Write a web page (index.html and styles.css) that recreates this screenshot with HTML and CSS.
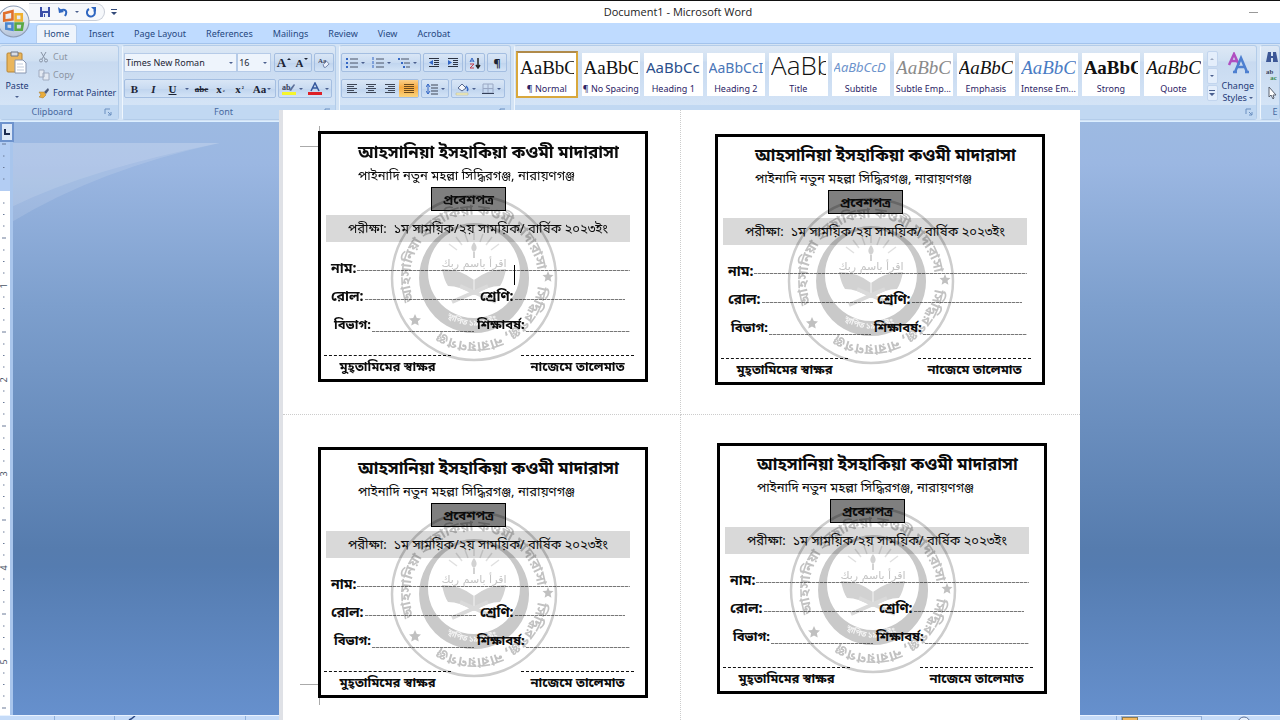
FILE: index.html
```html
<!DOCTYPE html>
<html lang="en">
<head>
<meta charset="utf-8">
<title>Document1 - Microsoft Word</title>
<link rel="stylesheet" href="styles.css">
</head>
<body>
<svg class="defs" aria-hidden="true">
  <defs>
    <linearGradient id="orb" x1="0" y1="0" x2="0" y2="1"><stop offset="0" stop-color="#fff"/><stop offset=".5" stop-color="#dbe3ee"/><stop offset="1" stop-color="#b4c4da"/></linearGradient>
    <symbol id="launch" viewBox="0 0 8 8"><path d="M1 6V1h5M4 4l3 3M7 4v3H4" fill="none" stroke="#6b8fc0"/></symbol>
    <symbol id="seal" viewBox="0 0 168 168">
      <path id="arc-top" d="M24 107A64 64 0 1 1 147.800 89.600" fill="none"/>
      <path id="arc-right" d="M147.600 92A64 64 0 0 1 26 111" fill="none"/>
      <path id="arc-inner" d="M48 115A47 47 0 0 0 120 115" fill="none"/>
      <circle cx="84" cy="84" r="82" stroke-width="2.500" fill="none" stroke="#cdcdcd"/>
      <path fill="#c9c9c9" fill-rule="evenodd" d="M84 29a55 55 0 1 0 .1 0zM84 32a46 46 0 1 1-.1 0z"/>
      <path fill="#d2d2d2" d="M52 75q18 0 32 11 14-11 32-11-2 11-6 17-12 0-26 9-14-9-26-9-4-6-6-17z"/>
      <path fill="none" stroke="#f4f4f4" d="M84 86v14"/>
      <path fill="none" stroke="#dadada" stroke-width="4" d="M62 108l36-16M106 108L70 92"/>
      <g stroke="#e0e0e0" stroke-width="1.500"><path d="M84 38v8M75 40l3 8M93 40l-3 8M66 43l6 8M102 43l-6 8M59 50l8 6M109 50l-8 6"/></g>
      <path fill="#d2d2d2" d="M84 48c4 5 3 8 0 10-3-2-4-5 0-10zM83 58h2v6h-2z"/>
      <text class="seal-arabic" x="84" y="73">اقرأ باسم ربك</text>
      <g fill="#c0c0c0"><path d="M25 120l1.800 3.900 4.200.5-3.100 2.900.8 4.200-3.700-2-3.700 2 .8-4.200-3.100-2.900 4.200-.5z"/><path d="M158 77l1.500 3.700 4 .4-3 2.700.9 4-3.400-2-3.400 2 .9-4-3-2.700 4-.4z"/></g>
      <text class="seal-text"><textPath href="#arc-top">আহসানিয়া ইসহাকিয়া কওমী মাদারাসা</textPath></text>
      <text class="seal-text"><textPath href="#arc-right">সিদ্ধিরগঞ্জ, নারায়ণগঞ্জ</textPath></text>
      <text class="seal-small"><textPath href="#arc-inner" startOffset="12">স্থাপিত ১৯৯৮ ইং</textPath></text>
    </symbol>
  </defs>
</svg>

<header class="titlebar">
  <button class="orb" aria-label="Office Button">
    <svg viewBox="0 0 32 32"><circle cx="16" cy="16" r="15" fill="url(#orb)" stroke="#8b9bb4"/><g fill="none" stroke-width="2.500"><path stroke="#e0702c" d="M7 8l8-2v8l-8 1z"/><path stroke="#f0b030" d="M18 9h6v6h-6z"/><path stroke="#4b86cf" d="M9 18h6v6l-6-1z"/><path stroke="#5aa844" d="M18 18h7l-1 6h-6z"/></g></svg>
  </button>
  <div class="quick">
    <button aria-label="Save"><svg viewBox="0 0 12 12"><path fill="#3a4ea8" d="M1 1h10v10H1z"/><path fill="#e9effa" d="M3 1h6v4H3zM4 7h5v4H4z"/><path fill="#3a4ea8" d="M5 8h1v3H5z"/></svg></button>
    <button aria-label="Undo"><svg viewBox="0 0 12 12"><path d="M3 5c5-3 8 0 5 5" fill="none" stroke="#2f66c0" stroke-width="2"/><path fill="#2f66c0" d="M1 1l1 6 5-1z"/></svg></button>
    <i class="caret"></i>
    <button aria-label="Repeat"><svg viewBox="0 0 12 12"><path d="M4 3a4 4 0 1 0 5 1" fill="none" stroke="#2f66c0" stroke-width="2"/><path fill="#2f66c0" d="M6 1h5v5z"/></svg></button>
  </div>
  <button class="customize" aria-label="Customize Quick Access Toolbar"><svg viewBox="0 0 6 7"><path fill="#334a7a" d="M0 0h6v1H0zM0 3h6L3 6z"/></svg></button>
  <h1>Document1 - Microsoft Word</h1>
  <div class="window-controls"><button aria-label="Minimize"></button></div>
</header>

<nav class="tabs" role="tablist">
  <button role="tab" aria-selected="true" class="tab active">Home</button>
  <button role="tab" class="tab">Insert</button>
  <button role="tab" class="tab">Page Layout</button>
  <button role="tab" class="tab">References</button>
  <button role="tab" class="tab">Mailings</button>
  <button role="tab" class="tab">Review</button>
  <button role="tab" class="tab">View</button>
  <button role="tab" class="tab">Acrobat</button>
</nav>

<section class="ribbon">
  <div class="group clipboard">
    <div class="tools">
      <button class="big"><svg class="paste-icon" viewBox="0 0 22 24"><rect x="1" y="2" width="15" height="19" rx="1" fill="#eab65c" stroke="#b98634"/><path d="M5 1h7v4H5z" fill="#d9dde4" stroke="#6c7484"/><path d="M9 9h8l3 3v10H9z" fill="#fff" stroke="#8896b0"/><path d="M11 13h6M11 16h7M11 19h7" stroke="#c3cddd"/></svg>Paste<i class="caret"></i></button>
      <div class="stack">
        <button class="off"><svg viewBox="0 0 12 12"><path d="M3 1l4 7M8 1L4 8" stroke="#8893a5" fill="none"/><circle cx="3" cy="9.500" r="1.500" fill="none" stroke="#8893a5"/><circle cx="8" cy="9.500" r="1.500" fill="none" stroke="#8893a5"/></svg>Cut</button>
        <button class="off"><svg viewBox="0 0 12 12"><path d="M1 1h5v7H1zM5 4h6v7H5z" fill="#e3e9f2" stroke="#a0abc0"/></svg>Copy</button>
        <button><svg viewBox="0 0 12 12"><path d="M6 5l4-4 1 2-3 4z" fill="#4d5a78"/><path d="M1 5l5 0 2 3-3 3-4-1 2-2z" fill="#e8ad3c" stroke="#a87724" stroke-width=".5"/></svg>Format Painter</button>
      </div>
    </div>
    <div class="group-name"><span>Clipboard</span><svg><use href="#launch"/></svg></div>
  </div>

  <div class="group font">
    <div class="tools rows">
      <div class="row">
        <div class="combo name"><select aria-label="Font"><option>Times New Roman</option></select><i class="caret"></i></div>
        <div class="combo size"><select aria-label="Font size"><option>16</option></select><i class="caret"></i></div>
        <div class="box gap"><button class="serif grow w18" aria-label="Grow font">A<i class="caret up dark"></i></button><button class="serif w18" aria-label="Shrink font">A<i class="caret dark"></i></button></div>
        <div class="box"><button class="w18" aria-label="Clear formatting"><svg viewBox="0 0 14 14"><text x="0" y="7" class="tiny">Aa</text><path d="M6 9l4-4 3 3-4 4H7z" fill="#e8eefa" stroke="#6679a0"/></svg></button></div>
      </div>
      <div class="row">
        <div class="box">
          <button class="serif w19">B</button><button class="serif w19 italic">I</button><button class="serif w19 under">U</button><button class="w10" aria-label="Underline style"><i class="caret"></i></button><button class="serif w19 strike mini">abc</button><button class="serif w19">x<sub>₂</sub></button><button class="serif w19">x<sup>²</sup></button><button class="serif w26">Aa<i class="caret"></i></button>
        </div>
        <div class="box gap2">
          <button class="w26" aria-label="Highlight"><svg class="color" viewBox="0 0 14 14"><text x="0" y="8" class="tiny">ab</text><path d="M7 8l5-6 1 1-4 6z" fill="#5c6f99"/><path fill="#f5f52c" d="M0 10h14v3H0z"/></svg><i class="caret"></i></button>
          <button class="w26" aria-label="Font colour"><svg class="color" viewBox="0 0 14 14"><path d="M3 9l4-8 4 8M5 6h4" fill="none" stroke="#35589c" stroke-width="1.500"/><path fill="#dd1f26" d="M0 10h14v3H0z"/></svg><i class="caret"></i></button>
        </div>
      </div>
    </div>
    <div class="group-name"><span>Font</span><svg><use href="#launch"/></svg></div>
  </div>

  <div class="group paragraph">
    <div class="tools rows">
      <div class="row tight">
        <div class="box">
          <button class="w26" aria-label="Bullets"><svg viewBox="0 0 12 12"><path d="M4 2h8M4 6h8M4 10h8" stroke="#4b5468"/><path d="M0 2h2M0 6h2M0 10h2" stroke="#3467c4" stroke-width="2"/></svg><i class="caret"></i></button>
          <button class="w26" aria-label="Numbering"><svg viewBox="0 0 12 12"><path d="M4 2h8M4 6h8M4 10h8" stroke="#4b5468"/><path d="M1 0v12" stroke="#3467c4" stroke-dasharray="3 1"/></svg><i class="caret"></i></button>
          <button class="w26" aria-label="Multilevel list"><svg viewBox="0 0 12 12"><path d="M3 2h8M6 6h6M8 10h4" stroke="#4b5468"/><path d="M0 2h2M3 6h2M5 10h2" stroke="#3467c4" stroke-width="2"/></svg><i class="caret"></i></button>
        </div>
        <div class="box">
          <button class="w19" aria-label="Decrease indent"><svg viewBox="0 0 12 12"><path d="M1 1.500h10M6 3.500h5M6 5.500h5M6 7.500h5M1 9.500h10" stroke="#2c3342"/><path d="M5 3v5L1 5.500z" fill="#3467c4"/></svg></button>
          <button class="w19" aria-label="Increase indent"><svg viewBox="0 0 12 12"><path d="M1 1.500h10M6 3.500h5M6 5.500h5M6 7.500h5M1 9.500h10" stroke="#2c3342"/><path d="M1 3v5l4-2.500z" fill="#3467c4"/></svg></button>
        </div>
        <div class="box"><button class="w18" aria-label="Sort"><svg viewBox="0 0 12 12"><path d="M1 5l2-4 2 4M1.500 4h3" fill="none" stroke="#3467c4"/><path d="M1 7h4l-4 4h4" fill="none" stroke="#c73c4a"/><path d="M9 1v9M7 8l2 3 2-3" fill="none" stroke="#222" stroke-width="1.500"/></svg></button></div>
        <div class="box"><button class="w18 mark">¶</button></div>
      </div>
      <div class="row tight">
        <div class="box">
          <button class="w19" aria-label="Align left"><svg viewBox="0 0 12 12"><path d="M1 1.500h10M1 3.500h7M1 5.500h10M1 7.500h7M1 9.500h10" stroke="#3e4656"/></svg></button>
          <button class="w19" aria-label="Centre"><svg viewBox="0 0 12 12"><path d="M1 1.500h10M3 3.500h6M1 5.500h10M3 7.500h6M1 9.500h10" stroke="#3e4656"/></svg></button>
          <button class="w19" aria-label="Align right"><svg viewBox="0 0 12 12"><path d="M1 1.500h10M4 3.500h7M1 5.500h10M4 7.500h7M1 9.500h10" stroke="#3e4656"/></svg></button>
          <button class="w19 on" aria-label="Justify"><svg viewBox="0 0 12 12"><path d="M1 1.500h10M1 3.500h10M1 5.500h10M1 7.500h10M1 9.500h10" stroke="#6b4a1c"/></svg></button>
        </div>
        <div class="box"><button class="w26" aria-label="Line spacing"><svg viewBox="0 0 12 12"><path d="M5 2h7M5 5h7M5 8h7M5 11h7" stroke="#3e4656"/><path d="M2 1v10M0 4l2-3 2 3M0 8l2 3 2-3" fill="none" stroke="#3467c4"/></svg><i class="caret"></i></button></div>
        <div class="box">
          <button class="w26" aria-label="Shading"><svg class="color" viewBox="0 0 14 14"><path d="M3 6l4-4 4 4-4 3z" fill="#f4f7fc" stroke="#54668c"/><path d="M11 4c2 2 2 4 1 5" fill="none" stroke="#3467c4" stroke-width="1.500"/><path d="M1 11h12v2H1z" fill="#f4f0c0" stroke="#b8b48a" stroke-width=".5"/></svg><i class="caret"></i></button>
          <button class="w26" aria-label="Borders"><svg viewBox="0 0 12 12"><path d="M1 1h10v9H1zM6 1v9M1 5.500h10" fill="none" stroke="#9aa8c4"/><path d="M0 10.500h12" stroke="#333f58"/></svg><i class="caret"></i></button>
        </div>
      </div>
    </div>
    <div class="group-name"><span></span><svg><use href="#launch"/></svg></div>
  </div>

  <div class="group styles">
    <div class="tools gallery">
      <button class="style chosen"><b class="s-normal">AaBbC</b><span>¶ Normal</span></button>
      <button class="style"><b class="s-normal">AaBbC</b><span>¶ No Spacing</span></button>
      <button class="style"><b class="s-h1">AaBbCc</b><span>Heading 1</span></button>
      <button class="style"><b class="s-h2">AaBbCcI</b><span>Heading 2</span></button>
      <button class="style"><b class="s-title">AaBb</b><span>Title</span></button>
      <button class="style"><b class="s-sub">AaBbCcD</b><span>Subtitle</span></button>
      <button class="style"><b class="s-emph grey">AaBbC</b><span>Subtle Emp...</span></button>
      <button class="style"><b class="s-emph">AaBbC</b><span>Emphasis</span></button>
      <button class="style"><b class="s-emph blue">AaBbC</b><span>Intense Em...</span></button>
      <button class="style"><b class="s-strong">AaBbC</b><span>Strong</span></button>
      <button class="style"><b class="s-emph">AaBbC</b><span>Quote</span></button>
      <div class="scroll"><button aria-label="Scroll up"><i class="caret up"></i></button><button aria-label="Scroll down"><i class="caret"></i></button><button aria-label="More styles"><svg viewBox="0 0 6 7"><path fill="#4a5f8e" d="M0 0h6v1H0zM0 3h6L3 6z"/></svg></button></div>
      <button class="big change"><svg class="change-icon" viewBox="0 0 22 22"><path d="M2 13L7 2l5 11M4 9h6" fill="none" stroke="#b04fc0" stroke-width="2.500"/><path d="M8 20l6-14 6 14M10 15h8M6 20h4M18 20h4" fill="none" stroke="#4d7fd0" stroke-width="2.500"/></svg>Change<span>Styles <i class="caret"></i></span></button>
    </div>
    <div class="group-name"><span></span><svg><use href="#launch"/></svg></div>
  </div>

  <div class="group editing">
    <div class="tools stack icons">
      <button aria-label="Find"><svg viewBox="0 0 12 12"><path d="M2 1h3v4h2V1h3l2 10H7V7H5v4H0z" fill="#3c5796"/></svg></button>
      <button aria-label="Replace"><svg viewBox="0 0 14 14"><text x="0" y="6" class="tiny">ab</text><text x="5" y="13" class="tiny green">ac</text></svg></button>
      <button aria-label="Select"><svg viewBox="0 0 12 12"><path d="M3 0v10l2-2 2 4 1-1-1-3h3z" fill="#fff" stroke="#5a6270"/></svg></button>
    </div>
    <div class="group-name"><span>E</span></div>
  </div>
</section>

<main class="workspace">
  <aside class="ruler">
    <button class="tabstop" aria-label="Tab selector"><svg viewBox="0 0 8 8"><path d="M2 1v5h5" fill="none" stroke="#1c2c50" stroke-width="2"/></svg></button>
    <svg class="scale">
      <defs><pattern id="ticks" width="10" height="94" y="49" patternUnits="userSpaceOnUse"><path stroke="#6a7a98" d="M3 12h1.500M3 23.500h1.500M3 35h1.500M2 47h4M3 59h1.500M3 70.500h1.500M3 82h1.500"/></pattern></defs>
      <rect width="10" height="49" fill="#b3cdf3"/><rect y="49" width="10" height="100%" fill="#fff"/><rect width="10" height="100%" fill="url(#ticks)"/>
      <g class="numbers"><text transform="translate(7 144) rotate(-90)">1</text><text transform="translate(7 238) rotate(-90)">2</text><text transform="translate(7 332) rotate(-90)">3</text><text transform="translate(7 426) rotate(-90)">4</text><text transform="translate(7 520) rotate(-90)">5</text></g>
    </svg>
  </aside>
  <div class="backdrop">
    <svg viewBox="0 0 265 100"><path fill="#fff" fill-opacity=".12" d="M0 0h206Q86 26 0 78z"/><path fill="#fff" fill-opacity=".12" d="M0 0h206Q76 26 0 63z"/></svg>
  </div>

  <article class="page" lang="bn">
    <div class="cell first">
      <section class="card">
        <svg class="seal"><use href="#seal"/></svg>
        <h2>আহসানিয়া ইসহাকিয়া কওমী মাদারাসা</h2>
        <p class="address">পাইনাদি নতুন মহল্লা সিদ্ধিরগঞ্জ, নারায়ণগঞ্জ</p>
        <p class="badge">প্রবেশপত্র</p>
        <p class="exam">পরীক্ষা:&nbsp; ১ম সাময়িক/২য় সাময়িক/ বার্ষিক ২০২৩ইং</p>
        <div class="fields"><span class="field">নাম:<i></i></span></div>
        <div class="fields mid"><span class="field">রোল:<i></i></span><span class="field">শ্রেণি:<i></i></span></div>
        <div class="fields low"><span class="field">বিভাগ:<i></i></span><span class="field">শিক্ষাবর্ষ:<i></i></span></div>
        <div class="signs"><span>মুহ্‌তামিমের স্বাক্ষর</span><span>নাজেমে তালেমাত</span></div>
        <span class="cursor"></span>
      </section>
    </div>
    <div class="cell second">
      <section class="card">
        <svg class="seal"><use href="#seal"/></svg>
        <h2>আহসানিয়া ইসহাকিয়া কওমী মাদারাসা</h2>
        <p class="address">পাইনাদি নতুন মহল্লা সিদ্ধিরগঞ্জ, নারায়ণগঞ্জ</p>
        <p class="badge">প্রবেশপত্র</p>
        <p class="exam">পরীক্ষা:&nbsp; ১ম সাময়িক/২য় সাময়িক/ বার্ষিক ২০২৩ইং</p>
        <div class="fields"><span class="field">নাম:<i></i></span></div>
        <div class="fields mid"><span class="field">রোল:<i></i></span><span class="field">শ্রেণি:<i></i></span></div>
        <div class="fields low"><span class="field">বিভাগ:<i></i></span><span class="field">শিক্ষাবর্ষ:<i></i></span></div>
        <div class="signs"><span>মুহ্‌তামিমের স্বাক্ষর</span><span>নাজেমে তালেমাত</span></div>
      </section>
    </div>
    <div class="cell third">
      <section class="card">
        <svg class="seal"><use href="#seal"/></svg>
        <h2>আহসানিয়া ইসহাকিয়া কওমী মাদারাসা</h2>
        <p class="address">পাইনাদি নতুন মহল্লা সিদ্ধিরগঞ্জ, নারায়ণগঞ্জ</p>
        <p class="badge">প্রবেশপত্র</p>
        <p class="exam">পরীক্ষা:&nbsp; ১ম সাময়িক/২য় সাময়িক/ বার্ষিক ২০২৩ইং</p>
        <div class="fields"><span class="field">নাম:<i></i></span></div>
        <div class="fields mid"><span class="field">রোল:<i></i></span><span class="field">শ্রেণি:<i></i></span></div>
        <div class="fields low"><span class="field">বিভাগ:<i></i></span><span class="field">শিক্ষাবর্ষ:<i></i></span></div>
        <div class="signs"><span>মুহ্‌তামিমের স্বাক্ষর</span><span>নাজেমে তালেমাত</span></div>
      </section>
    </div>
    <div class="cell fourth">
      <section class="card">
        <svg class="seal"><use href="#seal"/></svg>
        <h2>আহসানিয়া ইসহাকিয়া কওমী মাদারাসা</h2>
        <p class="address">পাইনাদি নতুন মহল্লা সিদ্ধিরগঞ্জ, নারায়ণগঞ্জ</p>
        <p class="badge">প্রবেশপত্র</p>
        <p class="exam">পরীক্ষা:&nbsp; ১ম সাময়িক/২য় সাময়িক/ বার্ষিক ২০২৩ইং</p>
        <div class="fields"><span class="field">নাম:<i></i></span></div>
        <div class="fields mid"><span class="field">রোল:<i></i></span><span class="field">শ্রেণি:<i></i></span></div>
        <div class="fields low"><span class="field">বিভাগ:<i></i></span><span class="field">শিক্ষাবর্ষ:<i></i></span></div>
        <div class="signs"><span>মুহ্‌তামিমের স্বাক্ষর</span><span>নাজেমে তালেমাত</span></div>
      </section>
    </div>
  </article>
</main>

<footer class="status">
  <div class="status-left"><i></i><i></i><svg viewBox="0 0 8 5"><path d="M1 4l2-1 4-3" fill="none" stroke="#2c4a86" stroke-width="1.500"/></svg><i></i></div>
  <div class="status-right"><i></i><div class="views"><b></b></div><svg viewBox="0 0 12 5"><circle cx="6" cy="7" r="6" fill="#e8f0fb" stroke="#5d7299"/></svg></div>
</footer>
</body>
</html>
```

FILE: styles.css
```css
* { box-sizing: border-box; }

body {
  margin: 0;
  height: 100vh;
  display: flex;
  flex-direction: column;
  overflow: hidden;
  background: #fff;
  color: #1e3a78;
  font: 9px/14px "Noto Sans", "Open Sans", sans-serif;
}

.defs { position: absolute; width: 0; height: 0; }

button {
  display: flex;
  align-items: center;
  justify-content: center;
  margin: 0;
  padding: 0;
  border: 0;
  background: none;
  color: inherit;
  font: inherit;
  white-space: nowrap;
}

.caret {
  flex: none;
  display: inline-block;
  width: 0;
  height: 0;
  border: 2px solid transparent;
  border-top-color: #4a5f8e;
  border-bottom: 0;
}
.caret.up { border-bottom: 2px solid #9aa7c0; border-top: 0; }
.caret.dark { border-top-color: #1c2434; border-bottom-color: #1c2434; align-self: flex-start; margin-top: 4px; }

/* title bar */
.titlebar {
  position: relative;
  flex: none;
  display: flex;
  align-items: center;
  height: 23px;
  border-top: 1px solid #111;
  background: #fff;
}
.orb { position: absolute; left: -3px; top: 4px; z-index: 2; width: 33px; height: 33px; }
.orb svg { width: 33px; height: 33px; }
.quick {
  display: flex;
  align-items: center;
  gap: 6px;
  width: 76px;
  height: 18px;
  margin-left: 29px;
  padding-left: 10px;
  border: 1px solid #c9ced8;
  border-left: 0;
  border-radius: 0 9px 9px 0;
  background: #f6f8fb;
}
.quick svg { width: 12px; height: 12px; }
.customize { width: 17px; }
.customize svg { width: 6px; height: 7px; }
h1 {
  flex: 1;
  margin: 0;
  color: #222;
  font: 400 11px/14px "Open Sans", "Noto Sans", sans-serif;
  text-align: center;
}
.window-controls { width: 46px; padding-left: 15px; }
.window-controls button { width: 9px; height: 1px; background: #999; }

/* tabs */
.tabs {
  flex: none;
  display: flex;
  height: 21px;
  padding: 1px 0 0 36px;
  background: #bfdbff;
  border-bottom: 1px solid #a3c3ec;
}
.tab { padding: 0 10px; color: #26487f; }
.tab.active {
  width: 41px;
  margin-right: 2px;
  padding: 0;
  border: 1px solid #b4cdee;
  border-bottom: 0;
  border-radius: 3px 3px 0 0;
  background: #eef4fc;
}

/* ribbon */
.ribbon {
  flex: none;
  display: flex;
  gap: 3px;
  height: 78px;
  padding: 1px 0;
  border-bottom: 1px solid #dcefff;
  background: #d3e3f5;
}
.group {
  display: flex;
  flex-direction: column;
  border: 1px solid #b3cce9;
  border-left-color: #eff6fd;
  border-radius: 3px;
  background: linear-gradient(#dde8f5, #d0e0f2 20%, #c8daf0 22%, #d8e7f8);
}
.tools { flex: 1; display: flex; }
.group-name {
  display: flex;
  align-items: center;
  height: 14px;
  background: #c1d8f2;
  color: #47699f;
  text-align: center;
}
.group-name span { flex: 1; }
.group-name svg { width: 8px; height: 8px; margin-right: 3px; }

.clipboard { width: 119px; border-left: 0; }
.clipboard .group-name { padding-right: 6px; padding-left: 0; }
.clipboard .group-name svg { margin-right: 0; }
.font { width: 214px; }
.paragraph { width: 172px; }
.styles { flex: 1; min-width: 0; }
.editing { width: 20px; overflow: hidden; }
.editing .group-name { padding-left: 10px; }

.big { flex-direction: column; justify-content: flex-start; width: 34px; line-height: 12px; }
.paste-icon { width: 22px; height: 24px; margin: 5px 0 5px; }
.big > .caret { margin-top: 4px; }
.stack { display: flex; flex-direction: column; padding: 2px 0 0 4px; }
.stack button { justify-content: flex-start; gap: 3px; height: 18px; }
.stack svg { width: 12px; height: 12px; }
.off { color: #8c95a3; }
.icons { padding-left: 5px; }

.rows { flex-direction: column; gap: 7px; padding: 7px 1px 0; }
.row { display: flex; height: 19px; }
.tight { gap: 2px; }
.box {
  display: flex;
  border: 1px solid #a4bee1;
  border-radius: 2px;
  background: linear-gradient(#d9e6f6, #c9dbf1 50%, #bfd4ee 52%, #d3e3f6);
}
.box svg { width: 12px; height: 12px; }
.box .color { width: 14px; height: 14px; }
.box button { gap: 3px; color: #1c2434; }
.gap { margin: 0 2px 0 3px; }
.gap2 { margin-left: 2px; }
.w10 { width: 10px; }
.w18 { width: 18px; }
.w19 { width: 19px; }
.w26 { width: 26px; }
.box .serif { gap: 1px; font: bold 11px/12px "Liberation Serif", serif; }
.serif sup, .serif sub { font-size: 7px; line-height: 8px; }
.box .grow { font-size: 13px; }
.box .mini { font-size: 9px; }
.box .mark { font-size: 11px; font-weight: 700; }
.box .italic { font-style: italic; }
.under { text-decoration: underline; }
.strike { text-decoration: line-through; }
.on { background: linear-gradient(#fbd08b, #f7a93f 45%, #fcd57d); }
.tiny { font: bold 8px "Liberation Serif", serif; fill: #39425a; }
.green { fill: #3b8a4a; }

.combo {
  display: flex;
  align-items: center;
  border: 1px solid #b6cbe8;
  background: #eef4fc;
  padding-right: 3px;
}
.combo select {
  flex: 1;
  min-width: 0;
  padding: 0 1px;
  border: 0;
  background: none;
  color: #1c2434;
  font: inherit;
  appearance: none;
}
.combo.name { width: 114px; }
.combo.size { width: 34px; }

.gallery { align-items: flex-start; gap: 4px; padding: 5px 2px 0 1px; }
.style {
  flex: 0 1 59px;
  min-width: 0;
  flex-direction: column;
  height: 43px;
  margin-top: 2px;
  overflow: hidden;
  background: #fff;
  color: #2b2466;
}
.style b {
  align-self: stretch;
  height: 29px;
  margin: 0 2px;
  overflow: hidden;
  color: #111;
  font-weight: 400;
  line-height: 29px;
  text-align: left;
}
.style span { line-height: 14px; }
.style.chosen { flex-basis: 62px; height: 47px; margin-top: 0; border: 2px solid #d9a83c; border-top-color: #b08a4a; }
.style .s-normal { font: 19px/29px "Liberation Serif", serif; }
.style .s-h1 { color: #2b4f8c; font-size: 15px; }
.style .s-h2 { color: #4a76b8; font-size: 14px; }
.style .s-title { font: 300 26px/24px "Open Sans", "Noto Sans", sans-serif; }
.style .s-sub { color: #6d93cc; font-size: 13px; font-style: italic; }
.style .s-emph { font: italic 19px/29px "Liberation Serif", serif; }
.style .s-strong { font: bold 19px/29px "Liberation Serif", serif; }
.style .grey { color: #8a8a8a; }
.style .blue { color: #4a7cc4; }
.scroll { display: flex; flex-direction: column; gap: 1px; width: 11px; }
.scroll button { height: 16px; border: 1px solid #c2d5ee; border-radius: 2px; background: #e4eefb; }
.scroll svg { width: 6px; height: 7px; }
.change { flex: 1; }
.change-icon { width: 22px; height: 22px; margin: 1px 0 6px; }
.change .caret { margin-bottom: 2px; }

/* workspace */
.workspace {
  flex: 1;
  min-height: 0;
  display: grid;
  grid-template-columns: 13px 266fr 801px 200fr;
  background: linear-gradient(#9dbae2, #9bb7e2 7%, #7d9fcd 31%, #567cae 72%, #557cb0 75%, #6690cd);
}
.ruler { display: flex; flex-direction: column; border-right: 3px solid #a8c5ec; }
.tabstop { flex: none; width: 14px; height: 20px; border: 2px solid #6e93cd; background: #dce8f8; }
.tabstop svg { width: 8px; height: 8px; }
.scale { flex: 1; min-height: 0; width: 10px; }
.numbers text { font: 9px "Noto Sans", sans-serif; fill: #4b5566; text-anchor: middle; }
.backdrop { padding-top: 21px; }
.backdrop svg { display: block; width: 100%; }

.page {
  z-index: 1;
  display: grid;
  grid-template-columns: 398fr 399fr;
  grid-template-rows: 305px 1fr;
  margin: -12px 0 -5px;
  border-left: 4px solid #dfe1e6;
  background: #fff;
  color: #0c0c0c;
  font: 13px/20px "Noto Sans Bengali", "Noto Sans", "Lohit Bengali", sans-serif;
}
.cell { position: relative; display: flex; align-items: flex-start; }
.first { padding: 21px 0 0 35px; border-right: 1px dotted #ccc; border-bottom: 1px dotted #ccc; }
.second { padding: 24px 0 0 34px; border-bottom: 1px dotted #ccc; }
.third { padding: 32px 0 0 35px; border-right: 1px dotted #ccc; }
.fourth { padding: 28px 0 0 36px; }
.first::before, .third::before {
  content: "";
  position: absolute;
  left: 17px;
  width: 19px;
  height: 20px;
  border: solid #aaa;
}
.first::before { top: 16px; border-width: 0 1px 1px 0; }
.third::before { top: 269px; border-width: 1px 1px 0 0; }

.card { position: relative; width: 330px; border: 3px solid #000; padding: 9px 0 1px; background: #fff; white-space: nowrap; }
.card h2, .card p { margin: 0; }
.card h2 { padding-left: 37px; font-size: 17px; line-height: 22px; font-weight: 700; }
.card .address { padding-left: 37px; line-height: 24px; }
.card .badge {
  width: 75px;
  height: 24px;
  margin: -2px 0 0 110px;
  border: 1px solid #000;
  background: #7f7f7f;
  font-weight: 700;
  line-height: 25px;
  text-align: center;
}
.card .exam { width: 304px; height: 27px; margin: 4px 0 14px 5px; background: #d9d9d9; line-height: 30px; text-align: center; }
.fields { display: grid; width: 299px; height: 28px; margin-left: 10px; font-size: 14px; font-weight: 700; }
.mid { grid-template-columns: 145px 145px; gap: 4px; }
.low { grid-template-columns: 140px 153px; gap: 3px; width: 296px; margin-left: 13px; font-size: 13px; }
.field { display: flex; align-items: center; gap: 1px; }
.field i { flex: 1; height: 2px; background: repeating-linear-gradient(90deg, #777 0 3px, #ccc 3px 4px) bottom / 100% 1px no-repeat; }
.mid i { height: 4px; }
.low i { height: 11px; }
.signs { display: flex; justify-content: space-between; margin: 15px 11px 0 3px; font-weight: 700; line-height: 24px; height: 23px; text-align: center; }
.signs span { width: 127px; border-top: 1px dashed #111; }
.signs span + span { width: 113px; }
.seal { position: absolute; left: 69px; top: 60px; width: 168px; height: 168px; mix-blend-mode: multiply; }
.seal-text { font: 700 14px "Noto Sans Bengali", "Noto Sans", sans-serif; fill: #c2c2c2; }
.seal-small { font: 700 8px "Noto Sans Bengali", "Noto Sans", sans-serif; fill: #f4f4f4; }
.seal-arabic { font: 11px "DejaVu Sans", sans-serif; fill: #c4c4c4; text-anchor: middle; }
.cursor { position: absolute; left: 193px; top: 131px; width: 1px; height: 20px; background: #000; }

/* status bar */
.status { flex: none; display: flex; justify-content: space-between; height: 5px; overflow: hidden; border-top: 1px solid #e8f2ff; background: #c5dbf8; }
.status i { width: 1px; height: 5px; background: #8fb0dc; }
.status-left { display: grid; grid-template-columns: 55px 60px 21px 110px; }
.status-left i { justify-self: end; }
.status-left svg { justify-self: end; width: 8px; height: 5px; overflow: visible; }
.status-right { display: flex; gap: 4px; width: 164px; }
.views { width: 81px; height: 12px; border: 1px solid #92aed6; background: #d5e5fa; }
.views b { display: block; width: 16px; height: 12px; border: 1px solid #8b7a50; background: #f2b860; }
.status-right svg { width: 12px; height: 5px; margin-left: 32px; }
```
